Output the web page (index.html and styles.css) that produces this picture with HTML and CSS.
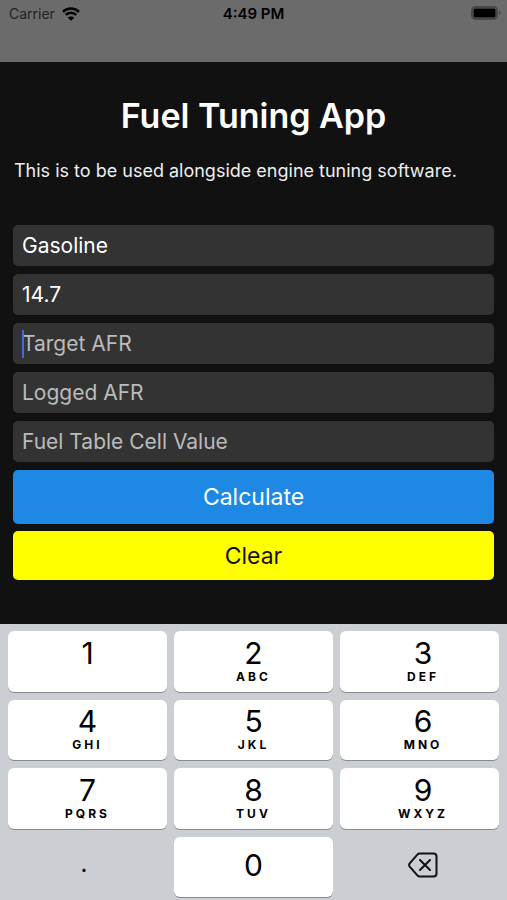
FILE: index.html
```html
<!DOCTYPE html>
<html lang="en">
  <head>
    <meta charset="UTF-8" />
    <meta name="viewport" content="width=device-width, initial-scale=1" />
    <title>Fuel Tuning App</title>
    <link rel="stylesheet" href="styles.css">
  </head>
  <body>
    <!-- Status bar -->
    <header class="status-bar">
      <div class="carrier">
        <span>Carrier</span>
        <svg class="wifi" viewBox="0 0 18 14" width="18" height="14" aria-hidden="true">
          <path d="M1 4.800a11.300 11.300 0 0 1 16 0" />
          <path d="M3.800 7.900a7.400 7.400 0 0 1 10.400 0" />
          <path class="wifi-dot" d="M9 13.800 5.900 10.700a4.400 4.400 0 0 1 6.200 0z" />
        </svg>
      </div>
      <span class="time">4:49 PM</span>
      <svg class="battery" viewBox="0 0 30 14" width="30" height="14" aria-hidden="true">
        <rect class="battery-case" x="1" y="1" width="25" height="12" rx="3.5" />
        <rect x="2.500" y="2.500" width="22" height="9" rx="1.500" />
        <path class="battery-cap" d="M28 5v4q1.700-.6 1.700-2T28 5z" />
      </svg>
    </header>

    <!-- Calculator form -->
    <main class="app">
      <h1>Fuel Tuning App</h1>
      <p class="intro">This is to be used alongside engine tuning software.</p>

      <form class="tuning-form">
        <select class="field" id="fuel" aria-label="Fuel type">
          <option>Gasoline</option>
        </select>
        <input class="field" id="stoich" type="text" value="14.7" aria-label="Stoichiometric AFR" />
        <div class="field-wrap">
          <input class="field" id="target" type="text" placeholder="Target AFR" aria-label="Target AFR" />
          <span class="caret"></span>
        </div>
        <input class="field" id="logged" type="text" placeholder="Logged AFR" aria-label="Logged AFR" />
        <input class="field" id="cell" type="text" placeholder="Fuel Table Cell Value" aria-label="Fuel Table Cell Value" />
        <div class="actions">
          <button class="btn calculate" type="button">Calculate</button>
          <button class="btn clear" type="reset">Clear</button>
        </div>
      </form>
    </main>

    <!-- Number pad -->
    <section class="keypad" aria-label="Keypad">
      <button class="key"><span class="digit">1</span><span class="letters"></span></button>
      <button class="key"><span class="digit">2</span><span class="letters">ABC</span></button>
      <button class="key"><span class="digit">3</span><span class="letters">DEF</span></button>
      <button class="key"><span class="digit">4</span><span class="letters">GHI</span></button>
      <button class="key"><span class="digit">5</span><span class="letters">JKL</span></button>
      <button class="key"><span class="digit">6</span><span class="letters">MNO</span></button>
      <button class="key"><span class="digit">7</span><span class="letters">PQRS</span></button>
      <button class="key"><span class="digit">8</span><span class="letters">TUV</span></button>
      <button class="key"><span class="digit">9</span><span class="letters">WXYZ</span></button>
      <button class="key plain point">.</button>
      <button class="key"><span class="digit">0</span></button>
      <button class="key plain" aria-label="Delete">
        <svg class="delete" viewBox="0 0 30 26" width="30" height="26" aria-hidden="true">
          <path d="M11.500 1.500H25.500A3 3 0 0 1 28.500 4.500V21.500A3 3 0 0 1 25.500 24.500H11.500Q10.500 24.500 9.800 23.800L1.700 14.600Q.5 13 1.700 11.400L9.800 2.200Q10.500 1.500 11.500 1.500Z" />
          <path d="M12 8 22 18M22 8 12 18" />
        </svg>
      </button>
    </section>
  </body>
</html>
```
FILE: styles.css
```css
* {
  box-sizing: border-box;
}

body {
  margin: 0;
  min-height: 100vh;
  display: flex;
  flex-direction: column;
  font-family: Inter, "Liberation Sans", sans-serif;
  background: #111;
  color: #fff;
}

/* Status bar */
.status-bar {
  display: grid;
  grid-template-columns: 1fr auto 1fr;
  align-items: start;
  height: 62px;
  padding: 4px 6px 0;
  background: #6b6b6b;
  color: #000;
  font-size: 14px;
  line-height: 20px;
}

.carrier {
  display: flex;
  align-items: center;
  gap: 7px;
  padding-left: 3px;
  color: #222;
}

.wifi {
  fill: none;
  stroke: #000;
  stroke-width: 2.6;
}

.wifi .wifi-dot {
  fill: #000;
  stroke: none;
}

.time {
  font-size: 15px;
  font-weight: 600;
}

.battery {
  justify-self: end;
  margin-top: 2px;
}

.battery-case {
  fill: none;
  stroke: #484848;
  stroke-width: 2;
}

.battery-cap {
  fill: #484848;
}

/* Form */
.app {
  padding: 32px 13px 44px;
}

h1 {
  margin: 0;
  text-align: center;
  font-size: 34px;
  font-weight: 600;
  line-height: 44px;
}

.intro {
  margin: 21px 0 42px;
  padding-left: 1px;
  font-size: 18px;
  line-height: 24px;
  color: #eee;
}

.tuning-form {
  display: flex;
  flex-direction: column;
  gap: 8px;
}

.field-wrap {
  position: relative;
  display: flex;
}

.field {
  appearance: none;
  width: 100%;
  height: 41px;
  margin: 0;
  padding: 0 9px;
  border: none;
  border-radius: 5px;
  outline: none;
  background: #333;
  color: #fff;
  font-family: inherit;
  font-size: 21px;
}

.field::placeholder {
  color: #bbb;
  opacity: 1;
}

.caret {
  position: absolute;
  top: 7px;
  left: 9px;
  width: 2px;
  height: 28px;
  background: #4469e0;
}

.actions {
  display: flex;
  flex-direction: column;
  gap: 7px;
}

.btn {
  border: none;
  border-radius: 5px;
  font-family: inherit;
  font-size: 23px;
  cursor: pointer;
}

.calculate {
  height: 54px;
  background: #1e88e5;
  color: #fff;
}

.clear {
  height: 49px;
  background: #ff0;
  color: #111;
}

/* Keypad */
.keypad {
  flex: 1;
  display: grid;
  grid-template-columns: repeat(3, 1fr);
  grid-auto-rows: 1fr;
  gap: 8px 7px;
  padding: 7px 8px 3px;
  background: #cbced3;
}

.key {
  display: flex;
  flex-direction: column;
  align-items: center;
  justify-content: center;
  padding: 0 0 3px;
  border: none;
  border-radius: 6px;
  background: #fff;
  box-shadow: 0 1px 0 #898a8d;
  color: #000;
  font-family: inherit;
}

.key:nth-child(3n) {
  padding-left: 7px;
}

.key.plain {
  background: transparent;
  box-shadow: none;
}

.key.point {
  padding: 0 7px 6px 0;
  font-size: 24px;
}

.digit {
  font-size: 30px;
  line-height: 34px;
}

.letters {
  height: 14px;
  font-size: 12px;
  font-weight: 700;
  line-height: 14px;
  letter-spacing: 3px;
}

.delete {
  fill: none;
  stroke: #111;
  stroke-width: 2;
  stroke-linecap: round;
}
```
